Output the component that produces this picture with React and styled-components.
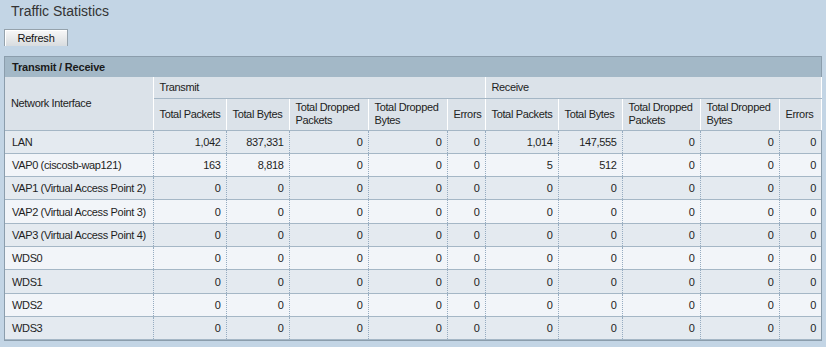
import styled, { createGlobalStyle } from "styled-components";

const GlobalStyle = createGlobalStyle`
  html, body {
    margin: 0;
    padding: 0;
    background-color: #c3d5e5;
    font-family: "Liberation Sans", Arial, sans-serif;
    color: #222;
  }
`;

const COLUMNS = [148, 73, 63, 79, 79, 38, 73, 64, 78, 79, 42];

const SUB_HEADERS = [
  "Total Packets",
  "Total Bytes",
  "Total Dropped Packets",
  "Total Dropped Bytes",
  "Errors",
];

const ROWS = [
  ["LAN", "1,042", "837,331", "0", "0", "0", "1,014", "147,555", "0", "0", "0"],
  ["VAP0 (ciscosb-wap121)", "163", "8,818", "0", "0", "0", "5", "512", "0", "0", "0"],
  ["VAP1 (Virtual Access Point 2)", "0", "0", "0", "0", "0", "0", "0", "0", "0", "0"],
  ["VAP2 (Virtual Access Point 3)", "0", "0", "0", "0", "0", "0", "0", "0", "0", "0"],
  ["VAP3 (Virtual Access Point 4)", "0", "0", "0", "0", "0", "0", "0", "0", "0", "0"],
  ["WDS0", "0", "0", "0", "0", "0", "0", "0", "0", "0", "0"],
  ["WDS1", "0", "0", "0", "0", "0", "0", "0", "0", "0", "0"],
  ["WDS2", "0", "0", "0", "0", "0", "0", "0", "0", "0", "0"],
  ["WDS3", "0", "0", "0", "0", "0", "0", "0", "0", "0", "0"],
];

function App() {
  return (
    <Page>
      <GlobalStyle />
      <Title>Traffic Statistics</Title>
      <RefreshButton type="button">Refresh</RefreshButton>
      <Panel>
        <PanelTitle>Transmit / Receive</PanelTitle>
        <StatsTable>
          <colgroup>
            {COLUMNS.map((w, i) => (
              <col key={i} style={{ width: w }} />
            ))}
          </colgroup>
          <thead>
            <GroupRow>
              <HeadCell rowSpan={2}>Network Interface</HeadCell>
              <HeadCell colSpan={5}>Transmit</HeadCell>
              <HeadCell colSpan={5}>Receive</HeadCell>
            </GroupRow>
            <LabelRow>
              {[...SUB_HEADERS, ...SUB_HEADERS].map((label, i) => (
                <HeadCell key={i}>{label}</HeadCell>
              ))}
            </LabelRow>
          </thead>
          <tbody>
            {ROWS.map((row, i) => (
              <DataRow key={row[0]} $odd={i % 2 === 0}>
                {row.map((value, j) => (
                  <DataCell key={j} $numeric={j > 0}>
                    {value}
                  </DataCell>
                ))}
              </DataRow>
            ))}
          </tbody>
        </StatsTable>
      </Panel>
    </Page>
  );
}

const Page = styled.div`
  width: 826px;
  height: 347px;
  display: flex;
  flex-direction: column;
  align-items: flex-start;
`;

const Title = styled.h1`
  margin: 0;
  padding: 3px 11px 0;
  font-size: 14px;
  line-height: 17px;
  font-weight: normal;
  color: #333;
`;

const RefreshButton = styled.button`
  margin: 9px 0 0 4px;
  width: 64px;
  height: 17px;
  padding: 0;
  font-family: "Liberation Sans", Arial, sans-serif;
  font-size: 11px;
  letter-spacing: -0.2px;
  color: #111;
  background: linear-gradient(#f8f8f8, #d8dcdf);
  border: 1px solid #95a2ac;
  border-bottom: none;
  box-shadow: inset 1px 1px 0 #ffffff;
  border-radius: 0;
`;

const Panel = styled.div`
  margin: 10px 0 0 4px;
  width: 816px;
  border: 1px solid #8b9dac;
  background-color: #dbe2e9;
`;

const PanelTitle = styled.div`
  height: 20px;
  line-height: 20px;
  padding-left: 7px;
  font-size: 11px;
  font-weight: bold;
  letter-spacing: -0.2px;
  color: #1a1a1a;
  background-color: #a3b8c7;
`;

const StatsTable = styled.table`
  width: 816px;
  table-layout: fixed;
  border-collapse: collapse;
  font-size: 11px;
  letter-spacing: -0.35px;
`;

const GroupRow = styled.tr`
  height: 21px;
`;

const LabelRow = styled.tr`
  height: 32px;
`;

const HeadCell = styled.th`
  padding: 0 1px 0 6px;
  text-align: left;
  vertical-align: middle;
  font-weight: normal;
  line-height: 13px;
  color: #222;
  background-color: #dbe2e9;
  border-left: 1px solid #ffffff;
  border-right: 1px solid #ffffff;
  border-bottom: 1px solid #a4b6c5;

  &:first-child {
    border-left: none;
  }
`;

const DataRow = styled.tr`
  height: 23.33px;
  background-color: ${(p) => (p.$odd ? "#e4eaf0" : "#f2f5f9")};
  border-bottom: 1px solid #a5b7c6;
`;

const DataCell = styled.td`
  padding: 0 5px 0 7px;
  text-align: ${(p) => (p.$numeric ? "right" : "left")};
  vertical-align: middle;
  white-space: nowrap;
  color: #1e1e1e;
  border-left: 1px dotted #95abc0;

  &:first-child {
    border-left: none;
  }
`;

export default App;
